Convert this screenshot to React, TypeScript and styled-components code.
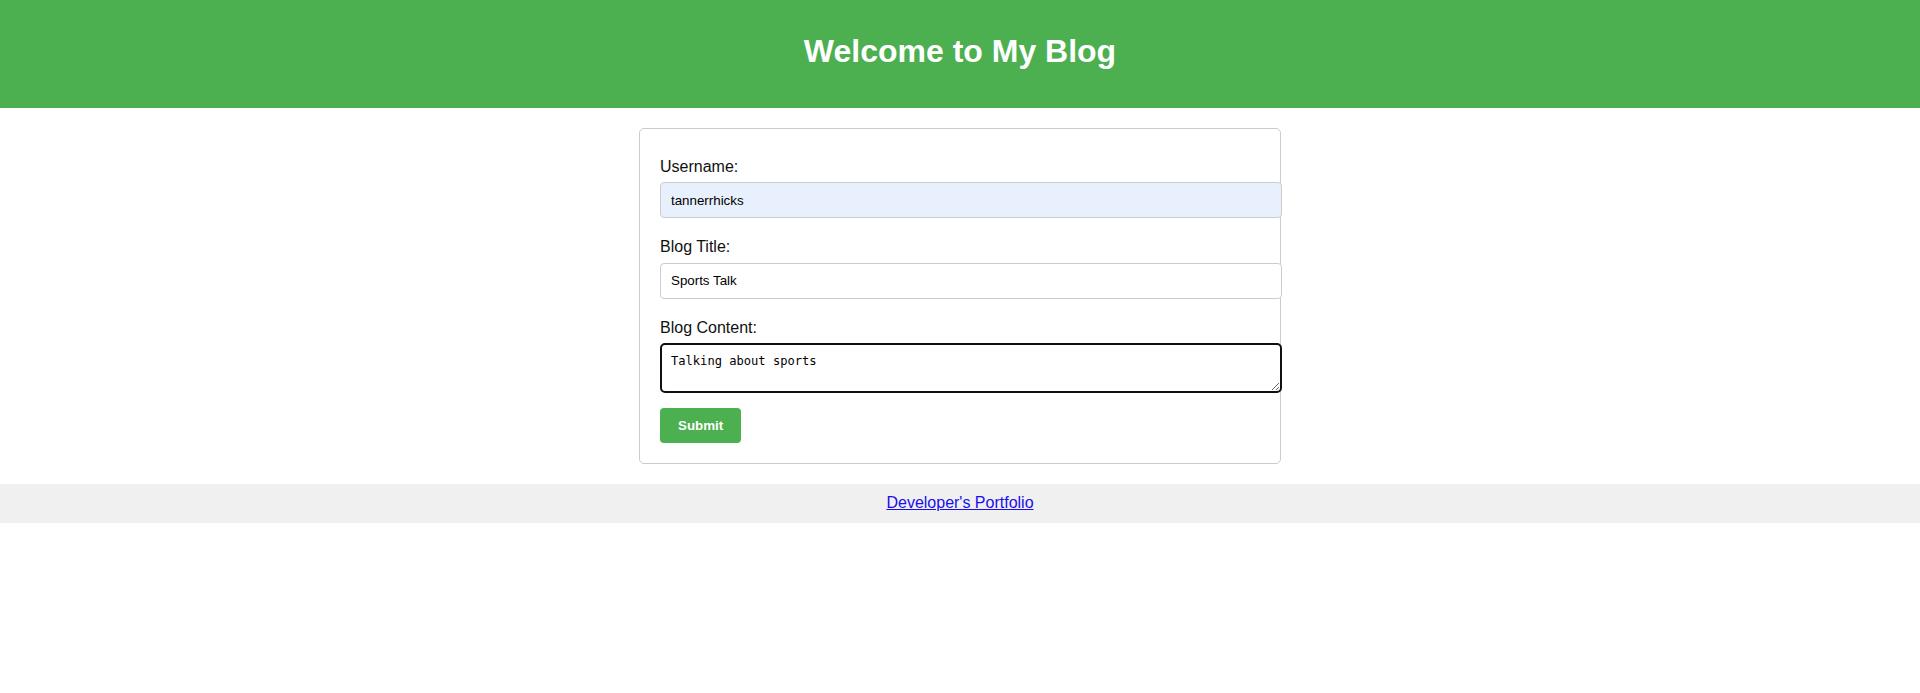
import React from "react";
import styled, { createGlobalStyle } from "styled-components";

const GlobalStyle = createGlobalStyle`
  html, body {
    margin: 0;
    padding: 0;
    background: #ffffff;
    font-family: "Liberation Sans", Arial, sans-serif;
    color: #111;
  }
  * { box-sizing: border-box; }
`;

const Page = styled.div`
  display: flex;
  flex-direction: column;
  align-items: stretch;
`;

const Header = styled.header`
  background: #4caf50;
  color: #ffffff;
  text-align: center;
  padding: 33px 0 38px;
`;

const Title = styled.h1`
  margin: 0;
  font-size: 32px;
  line-height: 37px;
  font-weight: bold;
`;

const Main = styled.main`
  display: flex;
  justify-content: center;
  padding: 20px 0;
`;

const Card = styled.form`
  width: 642px;
  border: 1px solid #ccc;
  border-radius: 5px;
  background: #fff;
  padding: 29px 20px 20px;
  display: flex;
  flex-direction: column;
  align-items: flex-start;
`;

const Field = styled.div`
  display: flex;
  flex-direction: column;
  width: 622px;
  margin-bottom: ${(p: { $gap: number }) => p.$gap}px;
`;

const Label = styled.label`
  font-size: 16px;
  line-height: 18.4px;
  margin-bottom: 6px;
  color: #111;
`;

const Input = styled.input<{ $autofill?: boolean }>`
  width: 622px;
  height: 36px;
  padding: 10px;
  border: 1px solid #ccc;
  border-radius: 4px;
  font-family: "Liberation Sans", Arial, sans-serif;
  font-size: 13.333px;
  line-height: 14px;
  color: #000;
  background: ${(p) => (p.$autofill ? "#e8f0fe" : "#ffffff")};
  outline: none;
`;

const TextArea = styled.textarea`
  width: 622px;
  height: 50px;
  padding: 9px;
  border: 2px solid #101010;
  border-radius: 5px;
  font-family: "DejaVu Sans Mono", "Liberation Mono", monospace;
  font-size: 12.1px;
  line-height: 15px;
  color: #000;
  background: #fff;
  outline: none;
  display: block;
`;

const SubmitButton = styled.button`
  background: #4caf50;
  color: #fff;
  border: none;
  border-radius: 4px;
  padding: 10px 18px;
  font-family: "Liberation Sans", Arial, sans-serif;
  font-size: 13.333px;
  line-height: 15px;
  font-weight: bold;
  cursor: pointer;
`;

const Footer = styled.footer`
  background: #f0f0f0;
  text-align: center;
  padding: 10px 0;
  font-size: 16px;
  line-height: 18.4px;
`;

const FooterLink = styled.a`
  color: #1a0dee;
  text-decoration: underline;
`;

export default function App() {
  return (
    <Page>
      <GlobalStyle />
      <Header>
        <Title>Welcome to My Blog</Title>
      </Header>
      <Main>
        <Card onSubmit={(e) => e.preventDefault()}>
          <Field $gap={20}>
            <Label htmlFor="username">Username:</Label>
            <Input id="username" $autofill defaultValue="tannerrhicks" />
          </Field>
          <Field $gap={20}>
            <Label htmlFor="title">Blog Title:</Label>
            <Input id="title" defaultValue="Sports Talk" />
          </Field>
          <Field $gap={15}>
            <Label htmlFor="content">Blog Content:</Label>
            <TextArea id="content" defaultValue="Talking about sports" />
          </Field>
          <SubmitButton type="submit">Submit</SubmitButton>
        </Card>
      </Main>
      <Footer>
        <FooterLink href="#">Developer's Portfolio</FooterLink>
      </Footer>
    </Page>
  );
}
